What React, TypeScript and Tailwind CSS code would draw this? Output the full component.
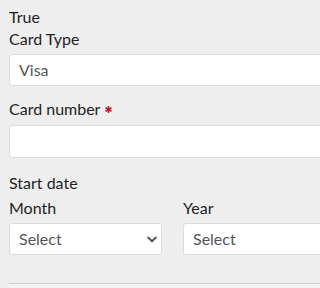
import React from "react";

function Chevron() {
  return (
    <svg width="10" height="7" viewBox="0 0 10 7" className="shrink-0">
      <path d="M1.2 1.5 L5 5.2 L8.8 1.5" fill="none" stroke="#555" strokeWidth="2" strokeLinecap="round" strokeLinejoin="round" />
    </svg>
  );
}

function Asterisk() {
  return (
    <svg width="7" height="7" viewBox="0 0 10 10" className="inline-block ml-[5px] align-[-1px]">
      <g stroke="#c8102e" strokeWidth="2.4" strokeLinecap="round">
        <line x1="5" y1="1" x2="5" y2="9" />
        <line x1="1.5" y1="3" x2="8.5" y2="7" />
        <line x1="1.5" y1="7" x2="8.5" y2="3" />
      </g>
    </svg>
  );
}

export default function App() {
  return (
    <div
      className="w-screen h-screen min-h-[288px] overflow-hidden bg-[#eeeeee] text-[#1e1e24]"
      style={{ fontFamily: "Lato, 'Open Sans', sans-serif" }}
    >
      <div className="w-[336px] pl-[9px] pt-[6px] text-[16px] leading-[22px]">
        <div>True</div>
        <div>Card Type</div>
        <div className="mt-[4px] h-[32px] bg-white border border-[#dcdcdc] rounded-[3px] flex items-center pl-[9px] text-[#555]">
          Visa
        </div>
        <div className="mt-[12px] flex items-center">
          <span>Card number</span>
          <Asterisk />
        </div>
        <div className="mt-[5px] h-[33px] bg-white border border-[#dcdcdc] rounded-[3px]" />
        <div className="mt-[14px]">Start date</div>
        <div className="mt-[3px] grid grid-cols-2 gap-x-[21px]">
          <div>
            <div>Month</div>
            <div className="mt-[4px] h-[32px] bg-white border border-[#dcdcdc] rounded-[3px] flex items-center justify-between pl-[9px] pr-[4px] text-[#555]">
              <span>Select</span>
              <Chevron />
            </div>
          </div>
          <div>
            <div>Year</div>
            <div className="mt-[4px] h-[32px] bg-white border border-[#dcdcdc] rounded-[3px] flex items-center justify-between pl-[9px] pr-[4px] text-[#555]">
              <span>Select</span>
              <Chevron />
            </div>
          </div>
        </div>
        <div className="mt-[28px] border-t border-[#cccccc] h-[6px] bg-[#f2f2f2]" />
      </div>
    </div>
  );
}
